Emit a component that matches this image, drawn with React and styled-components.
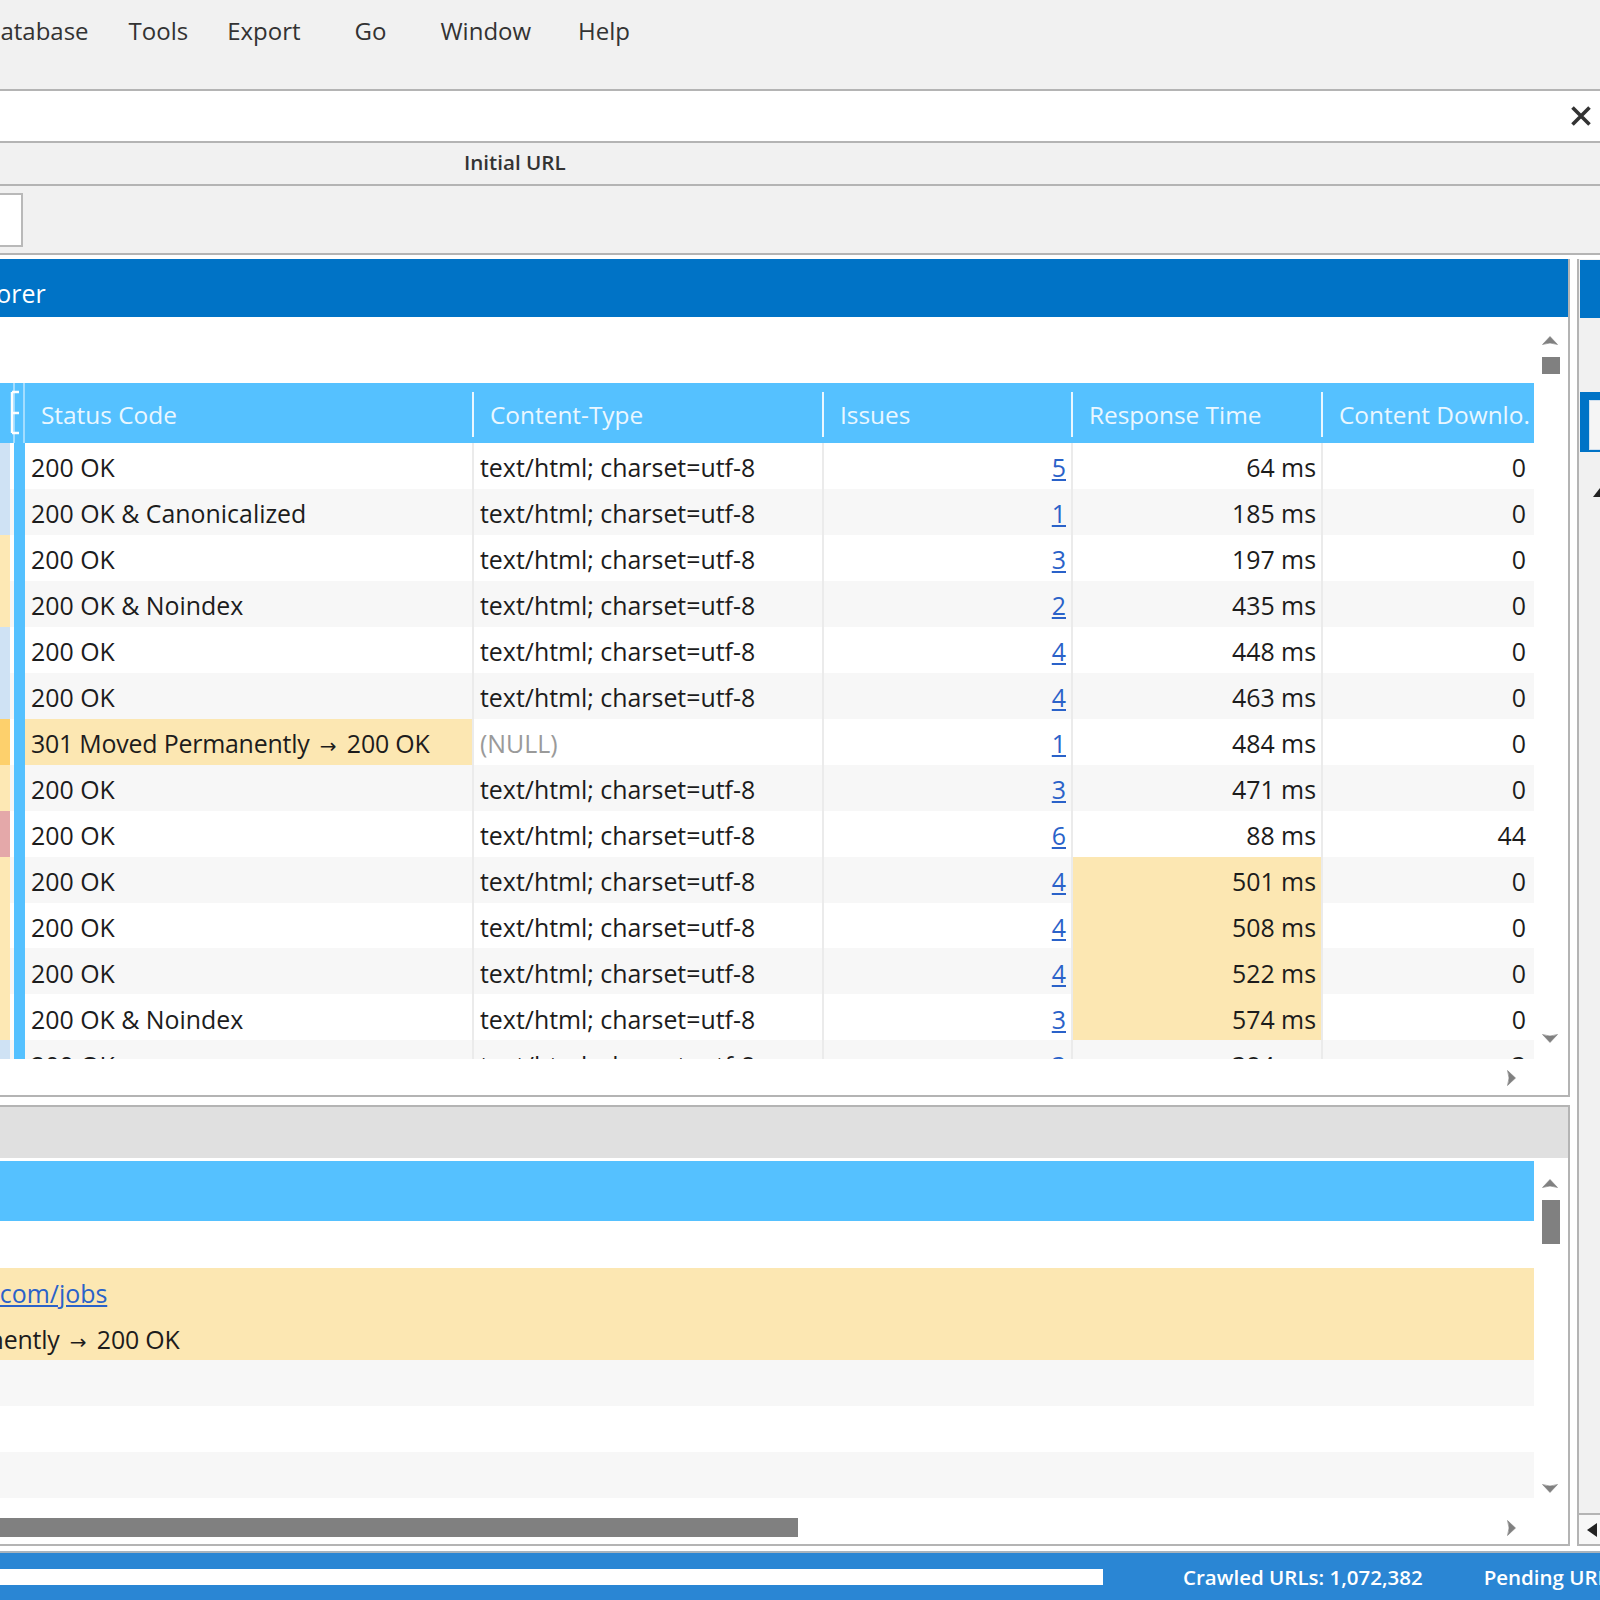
import React from 'react'
import styled, { createGlobalStyle } from 'styled-components'

const Global = createGlobalStyle`
html, body { margin: 0; padding: 0; background: #fff; }
* { box-sizing: border-box; }
`

const Page = styled.div`
width: 1600px;
height: 1600px;
overflow: hidden;
display: flex;
flex-direction: column;
font-family: "Open Sans", "Noto Sans", sans-serif;
font-size: 24.9px;
color: #1c1c1c;
background: #fff;
`

const MenuBar = styled.div`
height: 91px;
flex: none;
display: flex;
align-items: flex-start;
padding-top: 14px;
background: #f1f1f1;
border-bottom: 2px solid #b4b4b4;
color: #333;
font-size: 24px;
`

const MenuItem = styled.span`
margin-left: ${p => p.$left}px;
white-space: nowrap;
`

const UrlBar = styled.div`
height: 52px;
flex: none;
display: flex;
align-items: center;
justify-content: flex-end;
padding-right: 7px;
background: #fff;
border-bottom: 2px solid #b4b4b4;
`

const TabHead = styled.div`
height: 43px;
flex: none;
display: flex;
align-items: center;
padding: 0 0 3px 464px;
background: #f1f1f1;
border-bottom: 2px solid #b4b4b4;
font-size: 20.6px;
font-weight: 600;
color: #333;
`

const FilterBar = styled.div`
height: 69px;
flex: none;
display: flex;
align-items: center;
background: #f1f1f1;
border-bottom: 2px solid #b4b4b4;
`

const FilterBox = styled.div`
width: 25px;
height: 54px;
margin-left: -2px;
background: #fff;
border: 2px solid #b9b9b9;
`

const Main = styled.div`
flex: 1;
min-height: 0;
display: flex;
padding-bottom: 5px;
`

const LeftColumn = styled.div`
width: 1570px;
flex: none;
display: flex;
flex-direction: column;
padding-top: 4px;
gap: 8px;
`

const Panel = styled.section`
height: ${p => p.$height}px;
flex: none;
display: flex;
flex-direction: column;
border-right: 2px solid #b4b4b4;
border-bottom: 2px solid #b4b4b4;
border-top: ${p => (p.$topBorder ? '2px solid #b4b4b4' : '0')};
`

const TitleBar = styled.div`
height: 58px;
flex: none;
display: flex;
align-items: center;
padding-top: 10px;
background: #0073c6;
color: #fff;
`

const GrayBar = styled.div`
height: 51px;
flex: none;
background: #e0e0e0;
`

const Content = styled.div`
flex: 1;
min-height: 0;
display: flex;
`

const TableArea = styled.div`
width: 1534px;
flex: none;
display: flex;
flex-direction: column;
padding-top: ${p => p.$top}px;
overflow: hidden;
`

const Columns = styled.div`
display: grid;
grid-template-columns: 10px 4px 11px 449px 350px 249px 250px 1fr;
`

const HeaderRow = styled(Columns)`
height: 60px;
flex: none;
background: #55c1ff;
font-size: 24.4px;
`

const HeaderLead = styled.div`
grid-column: span 3;
`

const HeaderCell = styled.div`
display: flex;
align-items: center;
justify-content: space-between;
padding: 2px 0 0 16px;
color: #eaf7ff;
white-space: nowrap;
overflow: hidden;
`

const Grip = styled.span`
width: 2px;
height: 45px;
flex: none;
background: #eaf7ff;
`

const PlainHeader = styled.div`
height: 60px;
flex: none;
background: #55c1ff;
`

const Rows = styled.div`
flex: 1;
min-height: 0;
overflow: hidden;
padding-top: ${p => p.$top || 0}px;
`

const Row = styled(Columns)`
height: 45.96px;
background: #fff;
&:nth-child(even) { background: #f7f7f7; }
`

const Strip = styled.span`
background: ${p => p.$color};
`

const Spacer = styled.span``

const BlueStrip = styled.span`
background: #55c1ff;
`

const Cell = styled.div`
display: flex;
align-items: center;
justify-content: ${p => (p.$right ? 'flex-end' : 'flex-start')};
padding: 3px ${p => (p.$last ? 8 : p.$right ? 5 : 6)}px 0 6px;
background: ${p => (p.$warn ? '#fce7b2' : 'transparent')};
border-right: ${p => (p.$last ? '0' : '2px solid #ebebeb')};
color: ${p => (p.$muted ? '#9a9a9a' : 'inherit')};
white-space: pre;
overflow: hidden;
`

const IssueLink = styled.a`
color: #2a62c9;
text-decoration: underline;
`

const LowerRow = styled.div`
height: 46px;
display: flex;
align-items: center;
padding-top: 3px;
white-space: pre;
background: ${p => p.$bg};
`

const ClippedText = styled.span`
margin-left: ${p => p.$left}px;
`

const Moved = styled.span`
letter-spacing: -0.2px;
`

const MovedArrow = styled.span`
margin: 0 4px;
font-family: "DejaVu Sans", sans-serif;
font-size: 20px;
letter-spacing: 0;
`

const ScrollColumn = styled.div`
flex: 1;
display: flex;
flex-direction: column;
align-items: flex-start;
padding: ${p => p.$top}px 0 ${p => p.$bottom}px 8px;
`

const ScrollThumb = styled.div`
width: 18px;
height: ${p => p.$height}px;
margin-top: 8px;
background: #808080;
`

const ArrowSlot = styled.div`
margin-top: auto;
`

const HScroll = styled.div`
height: ${p => p.$height}px;
flex: none;
display: flex;
align-items: center;
justify-content: space-between;
width: 1534px;
padding: ${p => p.$top || 0}px 15px 0 0;
`

const HThumb = styled.div`
width: ${p => p.$width}px;
height: 19px;
background: #808080;
`

const RightColumn = styled.aside`
flex: 1;
display: flex;
flex-direction: column;
margin: 4px 0 0 7px;
padding: 1px 0 0 1px;
background: #f1f1f1;
border-left: 2px solid #b4b4b4;
border-bottom: 2px solid #b4b4b4;
`

const RightTitle = styled.div`
height: 58px;
flex: none;
background: #0073c6;
`

const RightTab = styled.div`
height: 60px;
flex: none;
margin-top: 74px;
padding: 8px 0 2px 9px;
background: #0073c6;
`

const RightTabInner = styled.div`
height: 100%;
background: #f5f5f5;
border: 1px solid #cfe0ef;
`

const RightUp = styled.div`
margin: 35px 0 0 13px;
line-height: 0;
`

const RightFoot = styled.div`
height: 31px;
flex: none;
margin-top: auto;
margin-left: -1px;
display: flex;
align-items: center;
padding-left: 8px;
background: #f7f7f7;
border-top: 2px solid #b4b4b4;
`

const StatusBar = styled.footer`
height: 49px;
flex: none;
display: flex;
align-items: center;
background: #2a86d4;
border-top: 2px solid #a9b4bd;
color: #fff;
font-size: 20.5px;
font-weight: 600;
white-space: nowrap;
`

const Progress = styled.div`
width: 1103px;
height: 16px;
flex: none;
background: #fff;
`

const StatusText = styled.span`
margin-left: ${p => p.$left}px;
`

const ROTATE = { up: 0, right: 90, down: 180, left: 270 }

function ScrollArrow({ dir }) {
  return (
    <svg width="16" height="16" viewBox="0 0 16 16" style={{ display: 'block', transform: `rotate(${ROTATE[dir]}deg)` }}>
      <path d="M8 3.5 L15.5 11.5 Q8 8.5 0.5 11.5 Z" fill="#808080" stroke="#808080" strokeWidth="0.6" />
    </svg>
  )
}

const CloseIcon = () => (
  <svg width="24" height="24" viewBox="0 0 24 24">
    <path d="M3.5 3.5 L20.5 20.5 M20.5 3.5 L3.5 20.5" stroke="#333" strokeWidth="3.6" fill="none" />
  </svg>
)

const GripLead = () => (
  <svg width="25" height="60" viewBox="0 0 25 60" style={{ display: 'block' }}>
    <path d="M14 0 V60 M24 0 V60" stroke="#d8f1ff" strokeWidth="1.2" fill="none" />
    <path d="M12 9 V50 M12 9 H19 M12 30 H19 M12 50 H19" stroke="#fff" strokeWidth="2.4" fill="none" />
  </svg>
)

const MovedStatus = () => (
  <Moved>301 Moved Permanently <MovedArrow>→</MovedArrow> 200 OK</Moved>
)

const BLUE = '#cfe2f4'
const YELLOW = '#fde8b4'
const ORANGE = '#fdd06c'
const PINK = '#e4a8a9'

const TYPE = 'text/html; charset=utf-8'
const rows = [
  { strip: BLUE, status: '200 OK', issues: 5, time: '64 ms', dl: 0 },
  { strip: BLUE, status: '200 OK & Canonicalized', issues: 1, time: '185 ms', dl: 0 },
  { strip: YELLOW, status: '200 OK', issues: 3, time: '197 ms', dl: 0 },
  { strip: YELLOW, status: '200 OK & Noindex', issues: 2, time: '435 ms', dl: 0 },
  { strip: BLUE, status: '200 OK', issues: 4, time: '448 ms', dl: 0 },
  { strip: BLUE, status: '200 OK', issues: 4, time: '463 ms', dl: 0 },
  { strip: ORANGE, status: <MovedStatus />, warnStatus: true, type: '(NULL)', issues: 1, time: '484 ms', dl: 0 },
  { strip: YELLOW, status: '200 OK', issues: 3, time: '471 ms', dl: 0 },
  { strip: PINK, status: '200 OK', issues: 6, time: '88 ms', dl: 44 },
  { strip: YELLOW, status: '200 OK', issues: 4, time: '501 ms', slow: true, dl: 0 },
  { strip: YELLOW, status: '200 OK', issues: 4, time: '508 ms', slow: true, dl: 0 },
  { strip: YELLOW, status: '200 OK', issues: 4, time: '522 ms', slow: true, dl: 0 },
  { strip: YELLOW, status: '200 OK & Noindex', issues: 3, time: '574 ms', slow: true, dl: 0 },
  { strip: BLUE, status: '200 OK', issues: 3, time: '384 ms', dl: 3 },
]

const headers = ['Status Code', 'Content-Type', 'Issues', 'Response Time']

export default function App() {
  return (
    <Page>
      <Global />
      <MenuBar>
        <MenuItem $left={-17}>Database</MenuItem>
        <MenuItem $left={40}>Tools</MenuItem>
        <MenuItem $left={39}>Export</MenuItem>
        <MenuItem $left={54}>Go</MenuItem>
        <MenuItem $left={54}>Window</MenuItem>
        <MenuItem $left={47}>Help</MenuItem>
      </MenuBar>
      <UrlBar><CloseIcon /></UrlBar>
      <TabHead>Initial URL</TabHead>
      <FilterBar><FilterBox /></FilterBar>
      <Main>
        <LeftColumn>
          <Panel $height={838}>
            <TitleBar><ClippedText $left={-52}>Explorer</ClippedText></TitleBar>
            <Content>
              <TableArea $top={66}>
                <HeaderRow>
                  <HeaderLead><GripLead /></HeaderLead>
                  {headers.map(h => (
                    <HeaderCell key={h}>{h}<Grip /></HeaderCell>
                  ))}
                  <HeaderCell>Content Downlo.</HeaderCell>
                </HeaderRow>
                <Rows>
                  {rows.map((r, i) => (
                    <Row key={i}>
                      <Strip $color={r.strip} />
                      <Spacer />
                      <BlueStrip />
                      <Cell $warn={r.warnStatus}>{r.status}</Cell>
                      <Cell $muted={!!r.type}>{r.type || TYPE}</Cell>
                      <Cell $right><IssueLink>{r.issues}</IssueLink></Cell>
                      <Cell $right $warn={r.slow}>{r.time}</Cell>
                      <Cell $right $last>{r.dl}</Cell>
                    </Row>
                  ))}
                </Rows>
              </TableArea>
              <ScrollColumn $top={16} $bottom={13}>
                <ScrollArrow dir="up" />
                <ScrollThumb $height={17} />
                <ArrowSlot><ScrollArrow dir="down" /></ArrowSlot>
              </ScrollColumn>
            </Content>
            <HScroll $height={36} $top={2}>
              <span />
              <ScrollArrow dir="right" />
            </HScroll>
          </Panel>
          <Panel $height={441} $topBorder>
            <GrayBar />
            <Content>
              <TableArea $top={3}>
                <PlainHeader />
                <Rows $top={1}>
                  <LowerRow $bg="#fff" />
                  <LowerRow $bg="#fce7b2">
                    <ClippedText $left={-197}><IssueLink>https://www.site.com/jobs</IssueLink></ClippedText>
                  </LowerRow>
                  <LowerRow $bg="#fce7b2">
                    <ClippedText $left={-219}><MovedStatus /></ClippedText>
                  </LowerRow>
                  <LowerRow $bg="#f7f7f7" />
                  <LowerRow $bg="#fff" />
                  <LowerRow $bg="#f7f7f7" />
                </Rows>
              </TableArea>
              <ScrollColumn $top={18} $bottom={13}>
                <ScrollArrow dir="up" />
                <ScrollThumb $height={44} />
                <ArrowSlot><ScrollArrow dir="down" /></ArrowSlot>
              </ScrollColumn>
            </Content>
            <HScroll $height={35} $top={2}>
              <HThumb $width={798} />
              <ScrollArrow dir="right" />
            </HScroll>
          </Panel>
        </LeftColumn>
        <RightColumn>
          <RightTitle />
          <RightTab><RightTabInner /></RightTab>
          <RightUp>
            <svg width="14" height="9" viewBox="0 0 14 9"><path d="M7 0 L14 9 H0 Z" fill="#222" /></svg>
          </RightUp>
          <RightFoot>
            <svg width="10" height="14" viewBox="0 0 10 14"><path d="M10 0 V14 L0 7 Z" fill="#222" /></svg>
          </RightFoot>
        </RightColumn>
      </Main>
      <StatusBar>
        <Progress />
        <StatusText $left={80}>Crawled URLs: 1,072,382</StatusText>
        <StatusText $left={61}>Pending URLs</StatusText>
      </StatusBar>
    </Page>
  )
}
